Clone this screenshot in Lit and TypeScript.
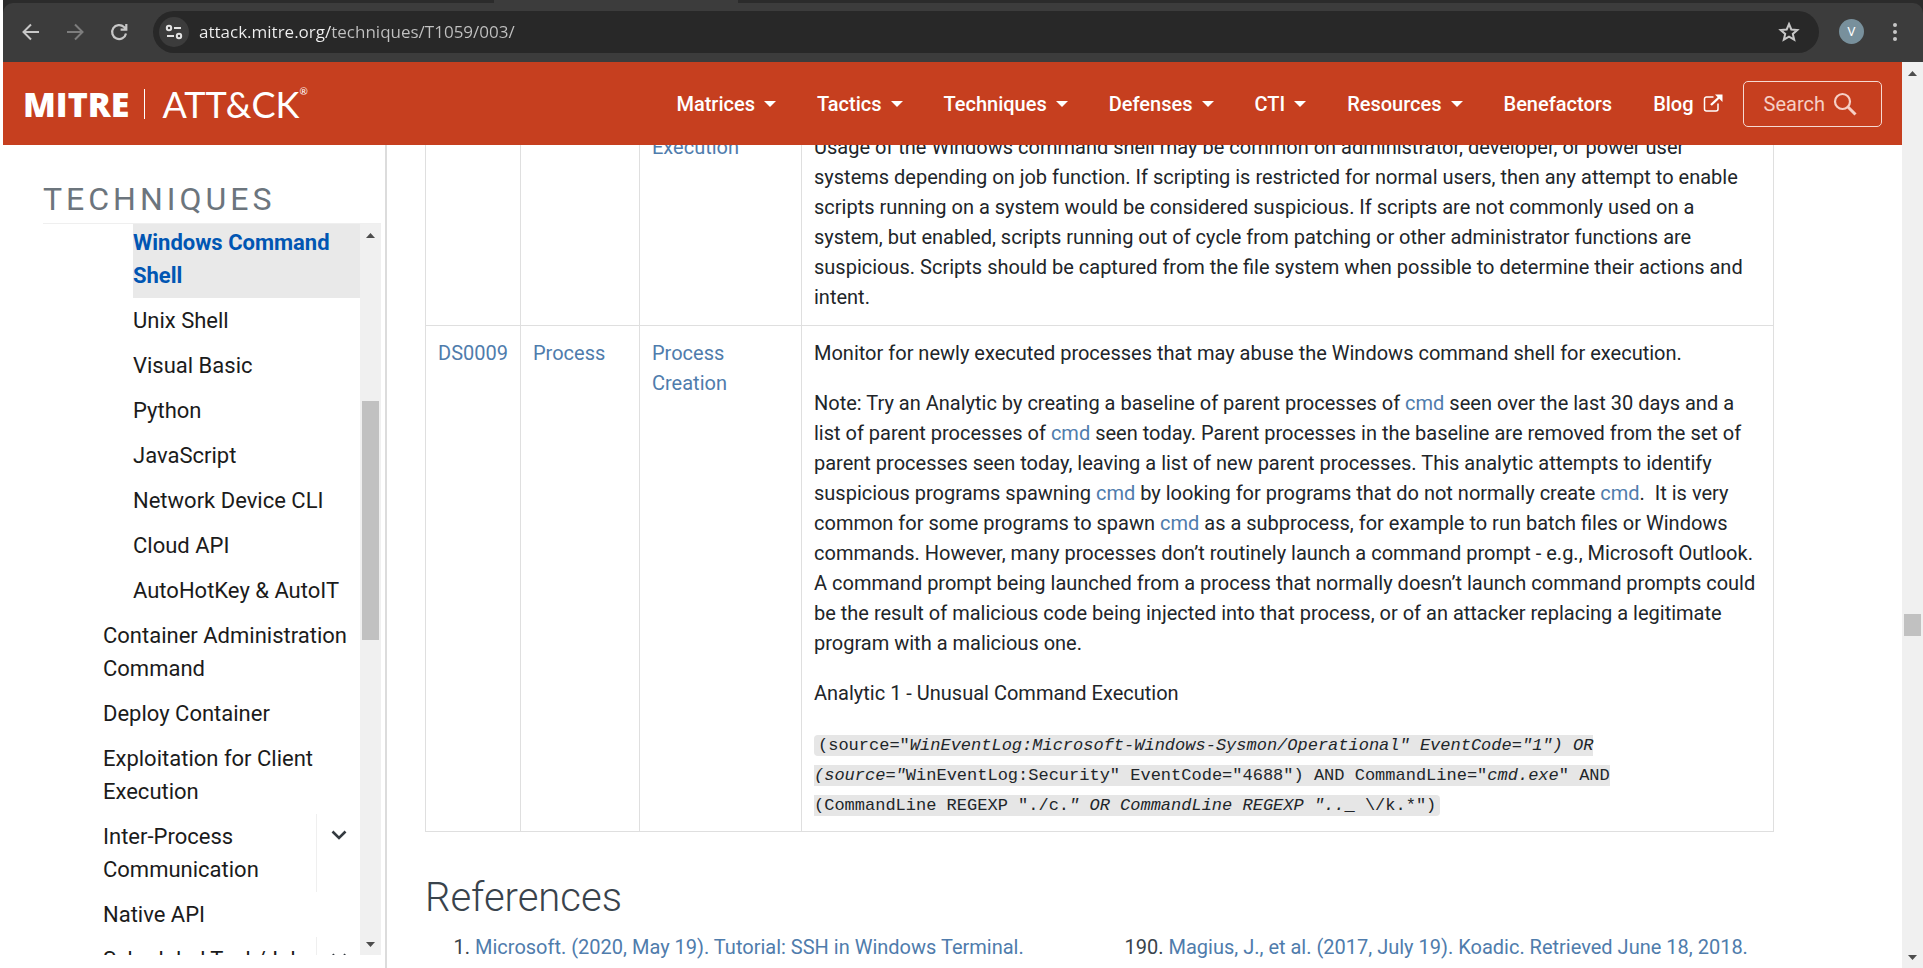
import { LitElement, html, css, svg } from "lit";
import { customElement, property } from "lit/decorators.js";
import { classMap } from "lit/directives/class-map.js";

const TEXT = css`
  :host {
    box-sizing: border-box;
    font-family: Roboto, "Liberation Sans", sans-serif;
    font-size: 20px;
    line-height: 30px;
    color: #212529;
  }
  *,
  *::before,
  *::after {
    box-sizing: border-box;
  }
  a {
    color: #4f7cac;
    text-decoration: none;
  }
  button {
    font: inherit;
    color: inherit;
    background: none;
    border: 0;
    padding: 0;
    cursor: pointer;
  }
  svg {
    display: block;
    flex: none;
  }
`;

/* Classic scroll bar: arrow, track with thumb, arrow. */
@customElement("scroll-track")
export class ScrollTrack extends LitElement {
  @property({ type: Number }) start = 0;
  @property({ type: Number }) size = 10;

  static styles = css`
    :host {
      display: flex;
      flex-direction: column;
      align-items: center;
      width: 21px;
      flex: none;
      background: #f0f0f0;
    }
    svg {
      display: block;
      flex: none;
      fill: #4d4d4d;
    }
    .track {
      flex: 1;
      width: 17px;
      position: relative;
    }
    .thumb {
      position: absolute;
      left: 0;
      right: 0;
      background: #c1c1c1;
    }
  `;

  render() {
    return html`
      <svg width="21" height="21" viewBox="0 0 21 21"><path d="M6 14l4.500-5 4.500 5z" /></svg>
      <div class="track">
        <div class="thumb" style="top:${this.start}%;height:${this.size}%"></div>
      </div>
      <svg width="21" height="21" viewBox="0 0 21 21"><path d="M6 8l4.500 5 4.500-5z" /></svg>
    `;
  }
}

@customElement("browser-bar")
export class BrowserBar extends LitElement {
  static styles = [
    TEXT,
    css`
      :host {
        display: block;
        background: #2b2b2b;
        color: #c7c7c7;
      }
      .tabs {
        height: 3px;
        padding-left: 491px;
      }
      .tab {
        width: 244px;
        height: 3px;
        background: #3c3c3c;
      }
      .bar {
        display: flex;
        align-items: center;
        height: 59px;
        padding: 0 25px 2px 16px;
        background: #3c3c3c;
        border-radius: 10px 10px 0 0;
      }
      .tool {
        width: 24px;
        height: 24px;
        margin-right: 20px;
      }
      .tool.dim {
        color: #7d7d7d;
      }
      .omni {
        display: flex;
        align-items: center;
        flex: 1;
        height: 42px;
        margin-left: 2px;
        padding: 0 18px 0 6px;
        border-radius: 21px;
        background: #282828;
      }
      .site {
        display: grid;
        place-items: center;
        width: 30px;
        height: 30px;
        border-radius: 50%;
        background: #3c3c3c;
        color: #e3e3e3;
      }
      input {
        flex: 1;
        min-width: 0;
        margin-left: 10px;
        padding: 0;
        border: 0;
        outline: 0;
        font: 17px/30px "Open Sans", "Noto Sans", sans-serif;
        color: #e3e3e3;
        background: linear-gradient(90deg, #f1f1f1 132px, #c2c2c2 132px);
        background-clip: text;
        -webkit-background-clip: text;
        -webkit-text-fill-color: transparent;
      }
      .avatar {
        width: 25px;
        height: 25px;
        margin: 0 28px 0 20px;
        border-radius: 50%;
        background: #78909c;
        color: #fff;
        font-size: 13px;
        line-height: 25px;
        text-align: center;
      }
    `,
  ];

  render() {
    return html`
      <div class="tabs"><div class="tab"></div></div>
      <div class="bar">
        <button class="tool" aria-label="Back">
          <svg width="24" height="24" viewBox="0 0 24 24" fill="none" stroke="currentColor" stroke-width="2">
            <path d="M20 12H5M12 4.500L4.500 12l7.500 7.500" />
          </svg>
        </button>
        <button class="tool dim" aria-label="Forward">
          <svg width="24" height="24" viewBox="0 0 24 24" fill="none" stroke="currentColor" stroke-width="2">
            <path d="M4 12h15M12 4.500l7.500 7.500-7.500 7.500" />
          </svg>
        </button>
        <button class="tool" aria-label="Reload">
          <svg width="24" height="24" viewBox="0 0 24 24" fill="none" stroke="currentColor" stroke-width="2.200">
            <path d="M19 13.500A7 7 0 1 1 17 7l2 2M19.300 4v5.700h-5.700" />
          </svg>
        </button>
        <div class="omni">
          <button class="site" aria-label="Site information">
            <svg width="18" height="18" viewBox="0 0 18 18" fill="none" stroke="currentColor" stroke-width="2">
              <circle cx="4" cy="5" r="2.200" />
              <path d="M9 5h7M2 13h7" />
              <circle cx="14" cy="13" r="2.200" />
            </svg>
          </button>
          <input type="text" aria-label="Address" .value=${"attack.mitre.org/techniques/T1059/003/"} />
          <button aria-label="Bookmark">
            <svg width="24" height="24" viewBox="0 0 24 24" fill="none" stroke="currentColor" stroke-width="2">
              <path d="M12 4l2.300 5.500 6 .5-4.500 3.900 1.400 5.800L12 16.600l-5.200 3.100 1.400-5.800L3.700 10l6-.5z" />
            </svg>
          </button>
        </div>
        <button class="avatar" aria-label="Profile">V</button>
        <button aria-label="Menu">
          <svg width="6" height="24" viewBox="0 0 6 24" fill="currentColor">
            <circle cx="3" cy="5" r="2" /><circle cx="3" cy="12" r="2" /><circle cx="3" cy="19" r="2" />
          </svg>
        </button>
      </div>
    `;
  }
}

@customElement("site-nav")
export class SiteNav extends LitElement {
  static styles = [
    TEXT,
    css`
      :host {
        display: flex;
        align-items: center;
        height: 83px;
        flex: none;
        padding: 0 20px;
        background: #c63f1f;
        color: #fff;
      }
      .logo {
        display: flex;
        align-items: center;
        margin-right: auto;
        color: #fff;
        font-family: Lato, sans-serif;
        font-size: 36px;
        line-height: 40px;
      }
      .mitre {
        font-family: "Open Sans", sans-serif;
        font-size: 34px;
        font-weight: 800;
      }
      .rule {
        width: 1px;
        height: 30px;
        margin: 0 17px 0 15px;
        background: #fff;
      }
      .reg {
        align-self: flex-start;
        font-size: 10px;
        line-height: 14px;
      }
      nav {
        display: flex;
        align-items: center;
        gap: 41px;
        font-weight: 500;
      }
      nav a,
      nav button {
        display: flex;
        align-items: center;
        gap: 9px;
        color: #fff;
      }
      .search {
        display: flex;
        align-items: center;
        gap: 8px;
        height: 46px;
        margin-left: 20px;
        padding: 0 24px 0 20px;
        border: 1px solid #f6d9d2;
        border-radius: 5px;
        color: #f6cfc5;
      }
    `,
  ];

  private menu(label: string) {
    return html`<button>
      ${label}
      <svg width="12" height="6" viewBox="0 0 12 6" fill="currentColor"><path d="M0 0h12L6 6z" /></svg>
    </button>`;
  }

  render() {
    return html`
      <a class="logo" href="#" aria-label="MITRE ATT&CK">
        <span class="mitre">MITRE</span><span class="rule"></span><span>ATT&amp;CK</span
        ><span class="reg">®</span>
      </a>
      <nav>
        ${["Matrices", "Tactics", "Techniques", "Defenses", "CTI", "Resources"].map((l) => this.menu(l))}
        <a href="#">Benefactors</a>
        <a href="#"
          >Blog
          <svg width="20" height="20" viewBox="0 0 20 20" fill="none" stroke="currentColor">
            <path d="M10.500 3H3.500A2 2 0 0 0 1.500 5v10a2 2 0 0 0 2 2H13a2 2 0 0 0 2-2V9.500" stroke-width="1.500" />
            <path d="M8 11L17 2.500" stroke-width="2.400" />
            <path d="M12 .5h7.500v7.500z" fill="currentColor" stroke="none" />
          </svg>
        </a>
      </nav>
      <button class="search">
        Search
        <svg width="24" height="24" viewBox="0 0 24 24" fill="none" stroke="currentColor">
          <circle cx="9.500" cy="9.500" r="7.500" stroke-width="2.200" />
          <path d="M15 15l7.500 7.500" stroke-width="3" />
        </svg>
      </button>
    `;
  }
}

interface Entry {
  label: string;
  sub?: boolean;
  active?: boolean;
  group?: boolean;
}

const ENTRIES: Entry[] = [
  { label: "Windows Command Shell", sub: true, active: true },
  { label: "Unix Shell", sub: true },
  { label: "Visual Basic", sub: true },
  { label: "Python", sub: true },
  { label: "JavaScript", sub: true },
  { label: "Network Device CLI", sub: true },
  { label: "Cloud API", sub: true },
  { label: "AutoHotKey & AutoIT", sub: true },
  { label: "Container Administration Command" },
  { label: "Deploy Container" },
  { label: "Exploitation for Client Execution" },
  { label: "Inter-Process Communication", group: true },
  { label: "Native API" },
  { label: "Scheduled Task/Job", group: true },
];

const chevron = svg`<svg width="16" height="10" viewBox="0 0 16 10" fill="none" stroke="#343a40" stroke-width="2.600"><path d="M1.500 1.500L8 8l6.500-6.500" /></svg>`;

@customElement("technique-sidebar")
export class TechniqueSidebar extends LitElement {
  static styles = [
    TEXT,
    css`
      :host {
        display: flex;
        flex-direction: column;
        width: 384px;
        flex: none;
        padding: 34px 4px 13px 40px;
        border-right: 2px solid #dcdcdc;
      }
      h2 {
        margin: 0;
        padding-bottom: 4px;
        border-bottom: 1px solid #efefef;
        font-size: 32px;
        line-height: 40px;
        font-weight: 400;
        letter-spacing: 4px;
        color: #6c757d;
      }
      .scroller {
        display: flex;
        flex: 1;
        min-height: 0;
      }
      .list {
        flex: 1;
        overflow: hidden;
        font-size: 22px;
        line-height: 33px;
      }
      .list ul {
        margin: -4px 0 0;
        padding: 0 0 0 60px;
        list-style: none;
      }
      li {
        display: flex;
      }
      li.sub {
        padding-left: 30px;
      }
      a {
        flex: 1;
        padding: 6px 0;
        color: #1b1b1b;
      }
      .active a {
        background: #e9e9e9;
        color: #0156b3;
        font-weight: 700;
      }
      li button {
        display: flex;
        justify-content: center;
        width: 44px;
        padding-top: 16px;
        border-left: 1px solid #efefef;
      }
    `,
  ];

  render() {
    return html`
      <h2>TECHNIQUES</h2>
      <div class="scroller">
        <div class="list">
          <ul>
            ${ENTRIES.map(
              (e) => html`<li class=${classMap({ sub: !!e.sub, active: !!e.active })}>
                <a href="#">${e.label}</a>
                ${e.group ? html`<button aria-label="Expand ${e.label}">${chevron}</button>` : ""}
              </li>`
            )}
          </ul>
        </div>
        <scroll-track .start=${22.6} .size=${34.7}></scroll-track>
      </div>
    `;
  }
}

@customElement("technique-page")
export class TechniquePage extends LitElement {
  static styles = [
    TEXT,
    css`
      :host {
        display: block;
        flex: 1;
        min-width: 0;
        overflow: hidden;
        padding: 0 128px 0 38px;
      }
      table {
        width: 100%;
        margin-top: -26px;
        border-collapse: collapse;
      }
      td {
        padding: 12px 12px 13px;
        border: 1px solid #dfdfdf;
        vertical-align: top;
      }
      .id {
        width: 95px;
      }
      .source {
        width: 119px;
      }
      .component {
        width: 162px;
      }
      p {
        margin: 0 0 20px;
      }
      p:last-child {
        margin-bottom: 0;
      }
      code {
        padding: 1px 4px;
        border-radius: 4px;
        background: #e6e6e6;
        font-family: "Liberation Mono", monospace;
        font-size: 17px;
        line-height: 20px;
      }
      h2 {
        margin: 41px 0 9px;
        font-size: 40px;
        line-height: 50px;
        font-weight: 300;
        color: #39434c;
      }
      .refs {
        display: grid;
        grid-template-columns: 1fr 1fr;
        color: #39434c;
      }
      ol {
        margin: 0;
        padding-left: 50px;
      }
      ol.second {
        padding-left: 69px;
      }
      li {
        padding-bottom: 6px;
      }
    `,
  ];

  render() {
    const cmd = html`<a href="#">cmd</a>`;
    return html`
      <table>
        <tbody>
          <tr>
            <td class="id"></td>
            <td class="source"></td>
            <td class="component"><a href="#">Execution</a></td>
            <td>
              <p>
                Usage of the Windows command shell may be common on administrator, developer, or power user systems
                depending on job function. If scripting is restricted for normal users, then any attempt to enable
                scripts running on a system would be considered suspicious. If scripts are not commonly used on a
                system, but enabled, scripts running out of cycle from patching or other administrator functions are
                suspicious. Scripts should be captured from the file system when possible to determine their actions
                and intent.
              </p>
            </td>
          </tr>
          <tr>
            <td><a href="#">DS0009</a></td>
            <td><a href="#">Process</a></td>
            <td><a href="#">Process Creation</a></td>
            <td>
              <p>Monitor for newly executed processes that may abuse the Windows command shell for execution.</p>
              <p>
                Note: Try an Analytic by creating a baseline of parent processes of ${cmd} seen over the last 30 days
                and a list of parent processes of ${cmd} seen today. Parent processes in the baseline are removed from
                the set of parent processes seen today, leaving a list of new parent processes. This analytic attempts
                to identify suspicious programs spawning ${cmd} by looking for programs that do not normally create
                ${cmd}.&nbsp; It is very common for some programs to spawn ${cmd} as a subprocess, for example to run
                batch files or Windows commands. However, many processes don’t routinely launch a command prompt -
                e.g., Microsoft Outlook. A command prompt being launched from a process that normally doesn’t launch
                command prompts could be the result of malicious code being injected into that process, or of an
                attacker replacing a legitimate program with a malicious one.
              </p>
              <p>Analytic 1 - Unusual Command Execution</p>
              <p>
                <code
                  >(source="<em>WinEventLog:Microsoft-Windows-Sysmon/Operational" EventCode="1") OR<br />(source="</em
                  >WinEventLog:Security" EventCode="4688") AND CommandLine="<em>cmd.exe</em>" AND<br />(CommandLine
                  REGEXP "./c.<em>" OR CommandLine REGEXP "..</em>_ \\/k.*")</code
                >
              </p>
            </td>
          </tr>
        </tbody>
      </table>
      <h2>References</h2>
      <div class="refs">
        <ol>
          <li><a href="#">Microsoft. (2020, May 19). Tutorial: SSH in Windows Terminal.</a></li>
        </ol>
        <ol class="second" start="190">
          <li><a href="#">Magius, J., et al. (2017, July 19). Koadic. Retrieved June 18, 2018.</a></li>
        </ol>
      </div>
    `;
  }
}

@customElement("app-root")
export class AppRoot extends LitElement {
  static styles = css`
    :host {
      display: flex;
      flex-direction: column;
      height: 100vh;
      overflow: hidden;
      background: #fff;
      padding-left: 3px;
      box-sizing: border-box;
    }
    browser-bar {
      flex: none;
    }
    .view {
      display: flex;
      flex: 1;
      min-height: 0;
    }
    .page {
      display: flex;
      flex-direction: column;
      flex: 1;
      min-width: 0;
    }
    .body {
      display: flex;
      flex: 1;
      min-height: 0;
    }
  `;

  render() {
    return html`
      <browser-bar></browser-bar>
      <div class="view">
        <div class="page">
          <site-nav></site-nav>
          <div class="body">
            <technique-sidebar></technique-sidebar>
            <technique-page></technique-page>
          </div>
        </div>
        <scroll-track .start=${61.5} .size=${2.5}></scroll-track>
      </div>
    `;
  }
}
